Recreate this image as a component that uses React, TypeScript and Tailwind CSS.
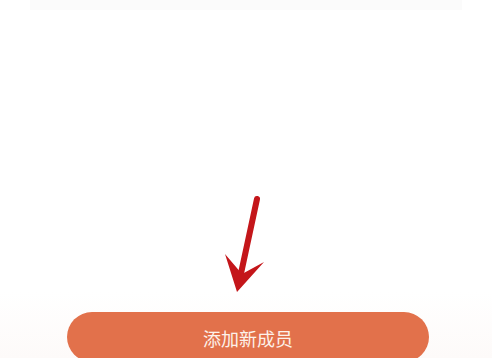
export default function App() {
  return (
    <div className="relative flex h-[358px] w-[492px] flex-col overflow-hidden bg-white font-['Noto_Sans_CJK_SC',sans-serif]">
      <div className="mx-[30px] h-[10px] bg-[#fbfbfb]" />
      <div className="flex-1" />
      <div className="bg-gradient-to-b from-white to-[#fdfaf9] px-[67px] pt-[20px]">
        <button
          type="button"
          className="-mb-[4px] flex h-[50px] w-[362px] items-center justify-center rounded-full bg-[#e2714b] pt-[3px] text-[18px] text-[#fdf1ea]"
        >
          添加新成员
        </button>
      </div>
      <svg
        className="absolute left-0 top-0"
        width="492"
        height="358"
        viewBox="0 0 492 358"
        aria-hidden="true"
      >
        <line x1="257" y1="199" x2="240" y2="278" stroke="#c4161a" strokeWidth="6" strokeLinecap="round" />
        <path d="M225 254 L237 292 L264 262 L242 274 Z" fill="#c4161a" />
      </svg>
    </div>
  );
}
